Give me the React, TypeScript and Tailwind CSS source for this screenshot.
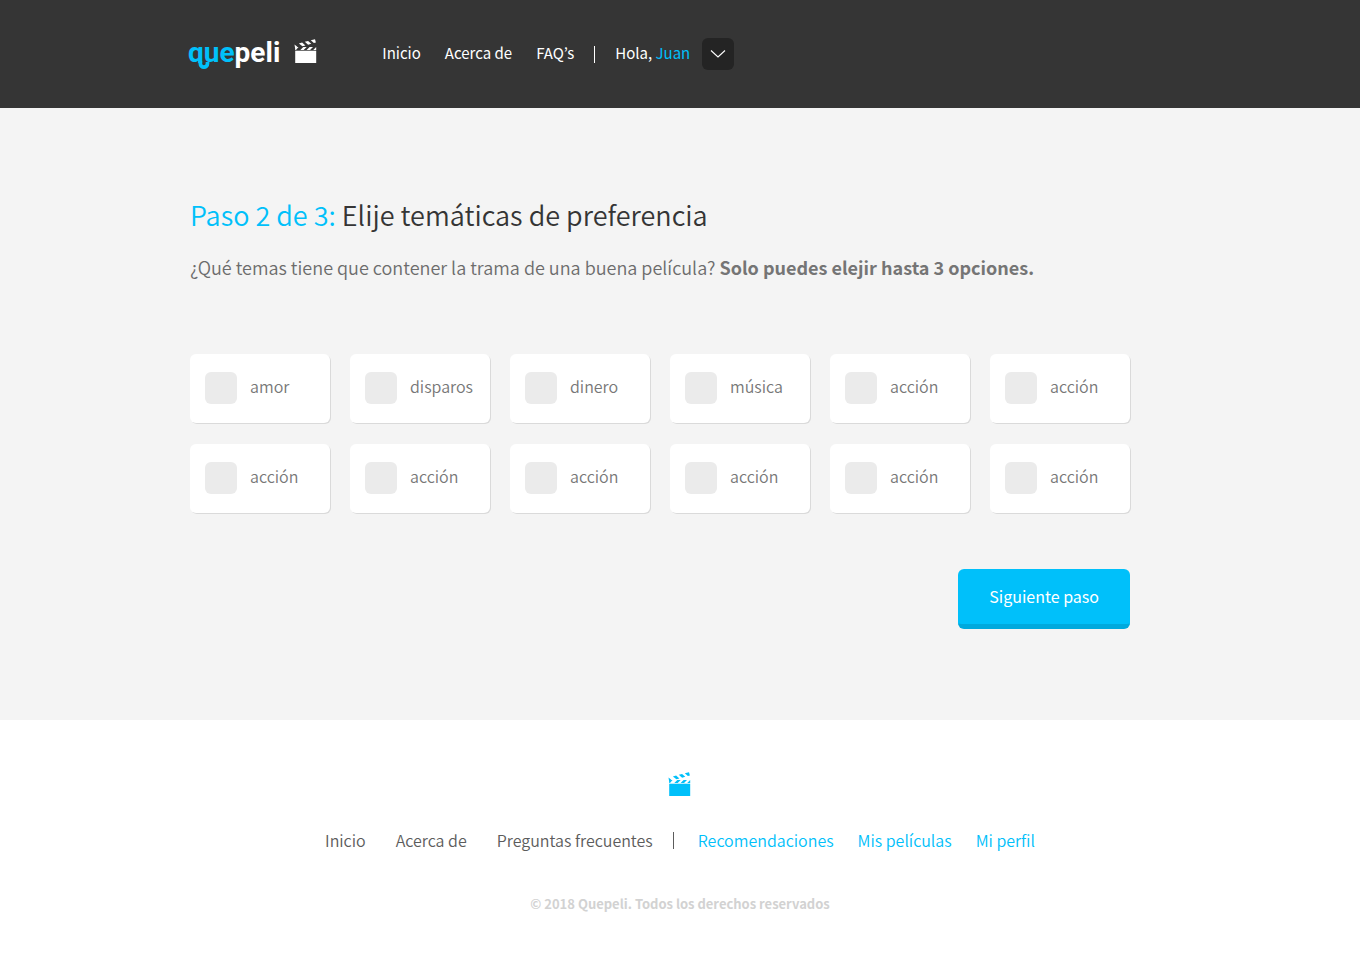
import { useState } from "react";

const sans = "font-['Noto_Sans_CJK_KR','Open_Sans',sans-serif]";

const themes = [
  "amor",
  "disparos",
  "dinero",
  "música",
  "acción",
  "acción",
  "acción",
  "acción",
  "acción",
  "acción",
  "acción",
  "acción",
];

const MAX_CHOICES = 3;

function Clapper({ className }: { className: string }) {
  return (
    <svg viewBox="0 0 24 26" className={className} fill="currentColor" aria-hidden="true">
      <path d="M1.200 12.700h21V25h-21z" />
      <path d="M1.200 12V9.800L2.800 8.900H4.500L2 12zM6.300 12l3-3.100h3.400l-3 3.100zM12.600 12l3-3.100H19L16 12zM19.200 12L22.200 9.100V12z" />
      <path d="M.5 6.500L3.300 8.700 1.200 11zM4.900 5.400l3.200-.9 3.300 2.900-3 .9zM10.800 3.800l3.300-.9 3.200 2.900-3.200.9zM16.800 2.300L21 1.200l.9 3.200-2 .6z" />
    </svg>
  );
}

function Logo() {
  return (
    <a href="#inicio" aria-label="quepeli" className="flex items-start gap-[14px]">
      <span className="relative mb-0.5 font-[Roboto,Arial,sans-serif] text-[28px] leading-[30px] font-bold text-white">
        <span className="text-[#00c0fa]">que</span>peli
        <svg
          viewBox="0 0 16 12"
          className="absolute top-5 left-2 h-3 w-4 text-[#00c0fa]"
          aria-hidden="true"
        >
          <path d="M1.500 5H7V12H1.500z" fill="#353535" />
          <path
            d="M4.300 3v2.600a3.600 3.600 0 0 0 7.200 0V4"
            fill="none"
            stroke="currentColor"
            strokeWidth="3.7"
          />
        </svg>
      </span>
      <Clapper className="h-[26px] w-6 text-white" />
    </a>
  );
}

function Header() {
  return (
    <header className="flex h-27 items-center gap-16 bg-[#353535] px-[188px]">
      <Logo />
      <nav aria-label="Principal" className="flex items-center text-[15px] leading-6 text-white">
        <div className="flex items-center gap-6 pb-[3px]">
          <a href="#inicio">Inicio</a>
          <a href="#acerca">Acerca de</a>
          <a href="#faqs">FAQ’s</a>
        </div>
        <span className="mx-5 h-[17px] w-px bg-white" />
        <span className="pb-[3px]">
          Hola,{" "}
          <a href="#perfil" className="text-[#00c0fa]">
            Juan
          </a>
        </span>
        <button
          type="button"
          aria-label="Abrir menú de usuario"
          className="ml-3 flex size-8 items-center justify-center rounded-md bg-[#242424]"
        >
          <svg viewBox="0 0 16 8" className="h-2 w-4" fill="none" stroke="currentColor" strokeWidth="1.100">
            <path d="M1 .5l7 6.500 7-6.500" />
          </svg>
        </button>
      </nav>
    </header>
  );
}

function Footer() {
  return (
    <footer className="flex flex-col items-center bg-white pt-[51px] pb-12">
      <Clapper className="h-[26px] w-6 text-[#00c0fa]" />
      <nav
        aria-label="Pie de página"
        className="mt-[31px] flex items-center text-base leading-6 font-[350] text-[#5c5c5c]"
      >
        <div className="flex gap-[30px]">
          <a href="#inicio">Inicio</a>
          <a href="#acerca">Acerca de</a>
          <a href="#faqs">Preguntas frecuentes</a>
        </div>
        <span className="mr-6 ml-5 h-[17px] w-px bg-[#5c5c5c]" />
        <div className="flex gap-6 text-[#00c0fa]">
          <a href="#recomendaciones">Recomendaciones</a>
          <a href="#peliculas">Mis películas</a>
          <a href="#perfil">Mi perfil</a>
        </div>
      </nav>
      <p className="mt-10 text-[13px] leading-6 font-bold text-[#d2d2d2]">
        © 2018 Quepeli. Todos los derechos reservados
      </p>
    </footer>
  );
}

export default function App() {
  const [chosen, setChosen] = useState<number[]>([]);

  const toggle = (i: number) =>
    setChosen((c) =>
      c.includes(i) ? c.filter((n) => n !== i) : c.length < MAX_CHOICES ? [...c, i] : c,
    );

  return (
    <div lang="es" className={`min-h-screen bg-white ${sans}`}>
      <Header />
      <main className="bg-[#f4f4f4] px-[190px] pt-[87px] pb-[91px]">
        <div className="max-w-[940px]">
          <h1 className="text-[27px] leading-10 font-[350] text-[#353535]">
            <span className="text-[#00c0fa]">Paso 2 de 3:</span> Elije temáticas de preferencia
          </h1>
          <p className="mt-4 text-lg leading-8 font-[350] text-[#6c6c6c]">
            ¿Qué temas tiene que contener la trama de una buena película?{" "}
            <strong className="font-bold text-[#757575]">Solo puedes elejir hasta 3 opciones.</strong>
          </p>
          <form onSubmit={(e) => e.preventDefault()}>
            <div className="mt-[71px] grid grid-cols-6 gap-x-5 gap-y-[21px]">
              {themes.map((name, i) => (
                <label
                  key={i}
                  className="flex h-[69px] items-center gap-[13px] rounded-md bg-white pb-px pl-[15px] text-base leading-6 font-[350] text-[#777777] shadow-[1px_1px_0_#dadada]"
                >
                  <input
                    type="checkbox"
                    checked={chosen.includes(i)}
                    onChange={() => toggle(i)}
                    className="size-8 shrink-0 appearance-none rounded-md bg-[#ebebeb] checked:bg-[#00c0fa]"
                  />
                  <span className="pb-1">{name}</span>
                </label>
              ))}
            </div>
            <div className="mt-14 flex justify-end">
              <button
                type="submit"
                className="h-15 rounded-md border-b-5 border-[#00a9dd] bg-[#00c0fa] px-[31px] pb-0.5 text-base leading-6 text-white"
              >
                Siguiente paso
              </button>
            </div>
          </form>
        </div>
      </main>
      <Footer />
    </div>
  );
}
